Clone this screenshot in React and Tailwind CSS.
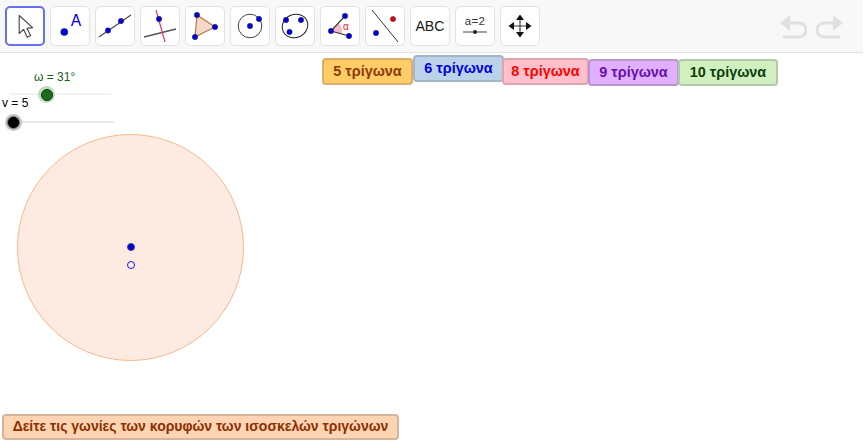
const Dot = ({ x, y, r = 3, fill = "#0000e0" }) => (
  <circle cx={x} cy={y} r={r} fill={fill} stroke="#20204a" strokeWidth="0.5" />
);

const Icon = ({ active, children }) => (
  <div className={`relative h-[40px] w-[40px] shrink-0 rounded-[5px] bg-white ${active ? "border-2 border-[#6870f0]" : "border border-[#e2e2e2]"}`}>
    <svg viewBox="0 0 40 40" className={`block h-[40px] w-[40px] overflow-visible ${active ? "m-[-2px]" : "m-[-1px]"}`}>
      {children}
    </svg>
  </div>
);

const icons = [
  <Icon active key="0">
    <path d="M14.2 9.5 V27.5 L18.6 23.4 L22.3 31.3 L25.6 29.5 L22 22.4 L27.6 21.6 Z" fill="#fff" stroke="#444" strokeWidth="1.1" strokeLinejoin="round" />
  </Icon>,
  <Icon key="1">
    <Dot x={14.3} y={26} r={3.6} />
    <text x={26} y={20} textAnchor="middle" fontSize="16" fill="#0000e0" fontFamily="Inter, 'Liberation Sans', sans-serif">A</text>
  </Icon>,
  <Icon key="2">
    <line x1="4" y1="31" x2="36" y2="9" stroke="#444" strokeWidth="1.1" />
    <Dot x={13} y={24.5} r={2.7} />
    <Dot x={26} y={15} r={2.7} />
  </Icon>,
  <Icon key="3">
    <line x1="4" y1="31" x2="36" y2="23" stroke="#555" strokeWidth="1.3" />
    <line x1="16" y1="4" x2="25" y2="36" stroke="#f03050" strokeWidth="1.1" />
    <Dot x={19} y={13} r={2.7} />
  </Icon>,
  <Icon key="4">
    <path d="M12 9 L30 21 L10 31 Z" fill="#f6d8c8" stroke="#bd7444" strokeWidth="1.2" />
    <Dot x={12} y={9} r={2.7} />
    <Dot x={30} y={21} r={2.7} />
    <Dot x={10} y={31} r={2.7} />
  </Icon>,
  <Icon key="5">
    <circle cx="20" cy="20" r="11.8" fill="none" stroke="#444" strokeWidth="1" />
    <Dot x={20} y={20} r={2.7} />
    <Dot x={29} y={13} r={2.7} />
  </Icon>,
  <Icon key="6">
    <ellipse cx="20" cy="20" rx="13" ry="11.5" transform="rotate(-25 20 20)" fill="none" stroke="#222" strokeWidth="1" />
    <Dot x={11} y={14} r={2.7} />
    <Dot x={26} y={14} r={2.7} />
    <Dot x={14.5} y={26} r={2.7} />
  </Icon>,
  <Icon key="7">
    <path d="M11 25 L18.5 17 A11 11 0 0 1 21.6 28 Z" fill="#f9bcc6" />
    <path d="M25 10 L11 25 L29 30" fill="none" stroke="#333" strokeWidth="1.1" />
    <Dot x={25} y={10} r={2.7} />
    <Dot x={11} y={25} r={2.7} />
    <Dot x={29} y={30} r={2.7} />
    <text x={26} y={23.5} textAnchor="middle" fontSize="10" fill="#f02020" fontFamily="'Liberation Sans', sans-serif">α</text>
  </Icon>,
  <Icon key="8">
    <line x1="7" y1="4" x2="33" y2="36" stroke="#333" strokeWidth="1" />
    <Dot x={28} y={13} r={2.6} fill="#f00000" />
    <Dot x={11} y={27} r={2.7} />
  </Icon>,
  <Icon key="9">
    <text x={20} y={25} textAnchor="middle" fontSize="14.2" fill="#1a1a1a" fontFamily="'Liberation Sans', sans-serif">ABC</text>
  </Icon>,
  <Icon key="10">
    <text x={20} y={19} textAnchor="middle" fontSize="11.5" letterSpacing="0.4" fill="#333" fontFamily="'Liberation Sans', sans-serif">a=2</text>
    <line x1="8" y1="26" x2="32" y2="26" stroke="#555" strokeWidth="1.1" />
    <circle cx="20" cy="26" r="2" fill="#222" />
  </Icon>,
  <Icon key="11">
    <path d="M20 12 V28 M12 20 H28" stroke="#333" strokeWidth="1.1" />
    <path d="M20 8.5 L24 14 H16 Z M20 31.5 L24 26 H16 Z M8.5 20 L14 16 V24 Z M31.5 20 L26 16 V24 Z" fill="#111" />
  </Icon>,
];

const History = () => (
  <div className="ml-auto mr-[20px] mt-[9px] flex h-[24px] gap-[9px]">
    <svg width="27" height="24" viewBox="0 0 27 24" fill="none" stroke="#e0e0e0" strokeWidth="3">
      <path d="M9 8 H19 A7 7 0 0 1 19 22 H3" />
      <path d="M0 8 L10 0 V16 Z" fill="#e0e0e0" stroke="none" />
    </svg>
    <svg width="27" height="24" viewBox="0 0 27 24" fill="none" stroke="#e0e0e0" strokeWidth="3">
      <path d="M18 8 H8 A7 7 0 0 0 8 22 H24" />
      <path d="M27 8 L17 0 V16 Z" fill="#e0e0e0" stroke="none" />
    </svg>
  </div>
);

const TriButton = ({ className, children }) => (
  <button className={`flex h-[27px] shrink-0 items-center justify-center rounded-[4px] border-2 pb-[1px] text-[14.4px] font-bold leading-none ${className}`}>
    {children}
  </button>
);

const Slider = ({ trackClass, thumbClass, innerClass }) => (
  <div className={`relative h-[2px] w-[101px] ${trackClass}`}>
    <div className={`absolute top-[-7px] flex h-[17px] w-[17px] items-center justify-center rounded-full ${thumbClass}`}>
      <div className={`rounded-full border ${innerClass}`} />
    </div>
  </div>
);

export default function App() {
  return (
    <div className="h-[448px] w-[864px] overflow-hidden bg-white font-['Liberation_Sans',sans-serif]">
      <div className="flex h-[53px] w-[863px] gap-[5px] border-b border-[#e2e2e2] bg-[#f8f8f8] pl-[5px] pt-[6px]">
        {icons}
        <History />
      </div>

      <div className="flex">
        <div className="flex w-[322px] shrink-0 flex-col items-start pt-[18px]">
          <span className="ml-[34px] h-[13px] whitespace-nowrap text-[12px] leading-[13px] text-[#1a5c1a]">ω = 31°</span>
          <div className="ml-[10px] mt-[9px]">
            <Slider trackClass="bg-[#f2f2f2]" thumbClass="left-[28px] bg-[#c3d9c3]" innerClass="h-[12px] w-[12px] border-[#0a3a0a] bg-[#1a6b1a]" />
          </div>
          <span className="ml-[2px] mt-[2px] h-[13px] whitespace-nowrap text-[12px] leading-[13px] text-black">v = 5</span>
          <div className="ml-[13px] mt-[11px]">
            <Slider trackClass="bg-[#e8e8e8]" thumbClass="left-[-8px] bg-[#c4c4c4]" innerClass="h-[13px] w-[13px] border-[#777] bg-black" />
          </div>

          <div className="ml-[17px] mt-[11px] flex h-[227px] w-[227px] shrink-0 flex-col items-center rounded-full border border-[#f6b98c] bg-[#fdebe1] pt-[108px]">
            <div className="h-[8px] w-[8px] rounded-full border border-[#444466] bg-[#0000e0]" />
            <div className="ml-[1px] mt-[10px] h-[8px] w-[8px] rounded-full border-[1.5px] border-[#1a1ae0]" />
          </div>

          <button className="ml-[2px] mt-[53px] flex h-[26px] w-[397px] shrink-0 items-center justify-center rounded-[4px] border-2 border-[#d5b49c] bg-[#ffd4b3] pb-[2px] text-[14px] font-bold leading-none text-[#8b2f00]">
            Δείτε τις γωνίες των κορυφών των ισοσκελών τριγώνων
          </button>
        </div>

        <div className="flex items-start pt-[2px]">
          <TriButton className="mt-[3px] w-[91px] border-[#d9ae6c] bg-[#ffcc66] text-[#8b3a0a]">5 τρίγωνα</TriButton>
          <TriButton className="w-[91px] border-[#a3b5c6] bg-[#bcd2e8] text-[#0000e0]">6 τρίγωνα</TriButton>
          <TriButton className="ml-[-2px] mt-[3px] w-[87px] border-[#dfa5b0] bg-[#ffc0cb] text-[#ff0000]">8 τρίγωνα</TriButton>
          <TriButton className="ml-[-1px] mt-[4px] w-[91px] border-[#bd95cc] bg-[#e0b0ff] text-[#6a0dad]">9 τρίγωνα</TriButton>
          <TriButton className="ml-[-1px] mt-[4px] w-[100px] border-[#b3c9ae] bg-[#d0f0c0] text-[#0b3d0b]">10 τρίγωνα</TriButton>
        </div>
      </div>
    </div>
  );
}
